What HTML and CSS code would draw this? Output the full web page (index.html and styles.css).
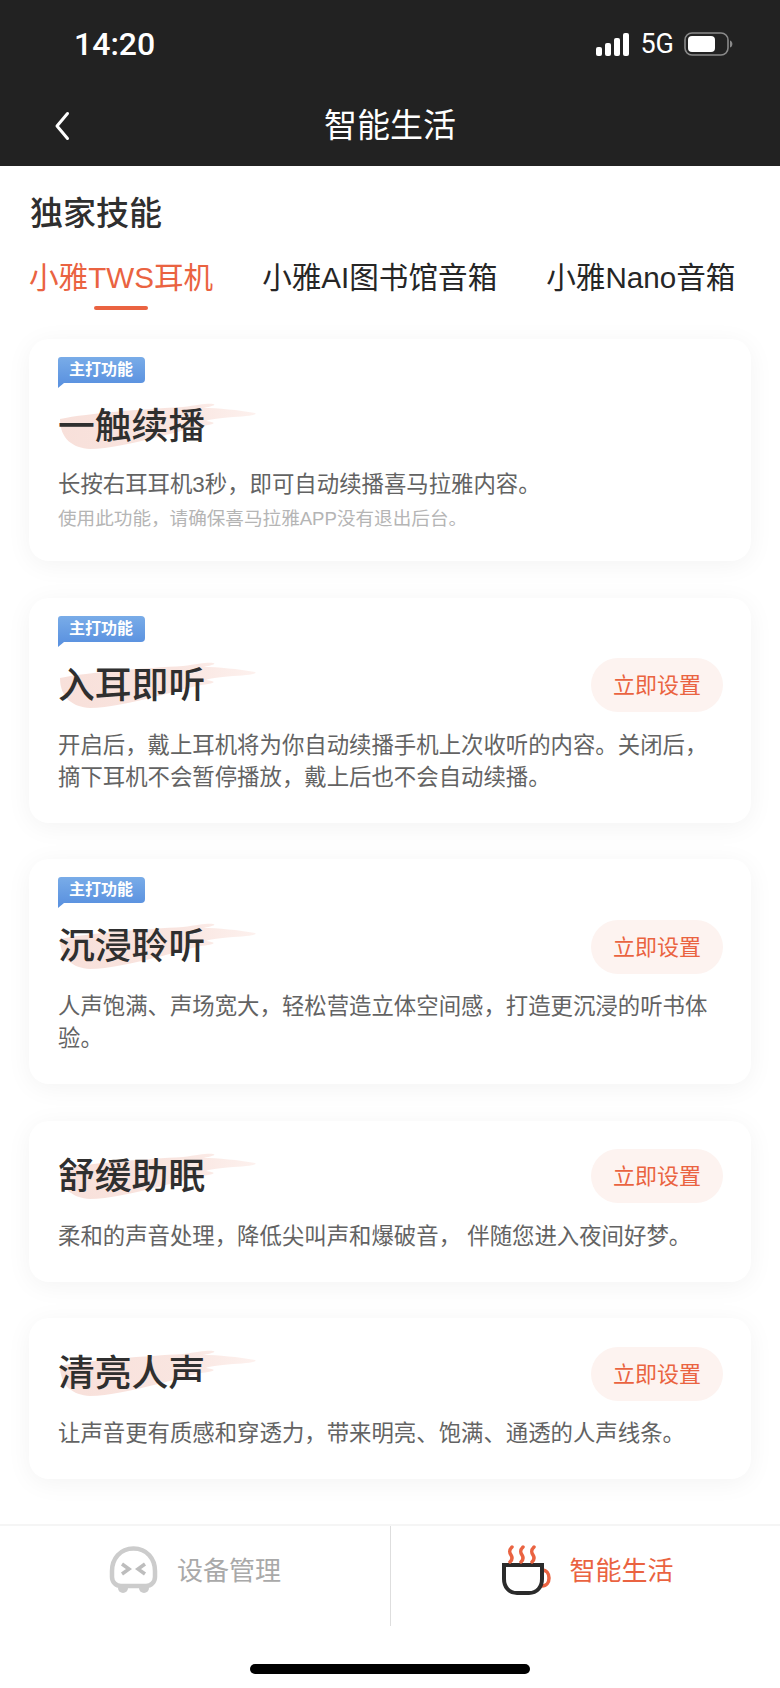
FILE: index.html
```html
<!DOCTYPE html>
<html lang="zh-CN">
<head>
    <meta charset="UTF-8">
    <meta name="viewport" content="width=device-width, initial-scale=1.0">
    <title>智能生活</title>
    <link rel="stylesheet" href="styles.css">
</head>
<body>
    <svg class="defs" width="0" height="0" aria-hidden="true">
        <linearGradient id="brush-fill" x1="0" y1="0" x2="1" y2="0">
            <stop offset="0" stop-color="#f8e0da"/>
            <stop offset="0.6" stop-color="#f9e5e0"/>
            <stop offset="1" stop-color="#fdf1ee"/>
        </linearGradient>
        <symbol id="brush" viewBox="0 0 200 46">
            <path d="M2 16C30 10 90 6 125 4c15-2 25-4 30-3 5 1-5 3-10 4 15 0 35 2 52 5 3 2-7 3-22 4-15 1-25 3-27 4 7 1 12 2 2 4-15 2-25 6-50 12-25 6-50 12-68 12C15 45 2 36 2 16z" fill="url(#brush-fill)"/>
        </symbol>
    </svg>

    <header class="top-bar">
        <div class="status-bar">
            <span class="time">14:20</span>
            <div class="status-icons">
                <svg width="36" height="24" viewBox="0 0 36 24">
                    <rect x="1" y="15" width="6" height="9" rx="2" fill="#fff"/>
                    <rect x="10" y="11" width="6" height="13" rx="2" fill="#fff"/>
                    <rect x="19" y="6" width="6" height="18" rx="2" fill="#fff"/>
                    <rect x="28" y="1" width="6" height="23" rx="2" fill="#fff"/>
                </svg>
                <span class="network">5G</span>
                <svg width="49" height="24" viewBox="0 0 49 24">
                    <rect x="1" y="1" width="43" height="22" rx="7" fill="none" stroke="#8a8a8a" stroke-width="1.600"/>
                    <rect x="4" y="4" width="27" height="16" rx="4" fill="#fff"/>
                    <path d="M46 8.500c1.600.5 2.400 2 2.400 3.500s-.8 3-2.400 3.500z" fill="#8a8a8a"/>
                </svg>
            </div>
        </div>
        <div class="nav-bar">
            <svg class="back" width="18" height="30" viewBox="0 0 18 30">
                <path d="M14.500 2.500L4 15l10.500 12.500" fill="none" stroke="#fff" stroke-width="3" stroke-linecap="round" stroke-linejoin="round"/>
            </svg>
            <span class="nav-title">智能生活</span>
        </div>
    </header>

    <main class="content">
        <h2 class="section-title">独家技能</h2>
        <div class="tabs">
            <span class="tab active">小雅TWS耳机</span>
            <span class="tab">小雅AI图书馆音箱</span>
            <span class="tab">小雅Nano音箱</span>
        </div>

        <section class="card">
            <div class="badge">主打功能</div>
            <div class="card-head plain">
                <h3 class="card-title"><svg class="brush"><use href="#brush"/></svg><span>一触续播</span></h3>
            </div>
            <p class="card-desc">长按右耳耳机3秒，即可自动续播喜马拉雅内容。</p>
            <p class="card-hint">使用此功能，请确保喜马拉雅APP没有退出后台。</p>
        </section>

        <section class="card">
            <div class="badge">主打功能</div>
            <div class="card-head">
                <h3 class="card-title"><svg class="brush"><use href="#brush"/></svg><span>入耳即听</span></h3>
                <button class="set-btn">立即设置</button>
            </div>
            <p class="card-desc">开启后，戴上耳机将为你自动续播手机上次收听的内容。关闭后，摘下耳机不会暂停播放，戴上后也不会自动续播。</p>
        </section>

        <section class="card">
            <div class="badge">主打功能</div>
            <div class="card-head">
                <h3 class="card-title"><svg class="brush"><use href="#brush"/></svg><span>沉浸聆听</span></h3>
                <button class="set-btn">立即设置</button>
            </div>
            <p class="card-desc">人声饱满、声场宽大，轻松营造立体空间感，打造更沉浸的听书体验。</p>
        </section>

        <section class="card">
            <div class="card-head">
                <h3 class="card-title"><svg class="brush"><use href="#brush"/></svg><span>舒缓助眠</span></h3>
                <button class="set-btn">立即设置</button>
            </div>
            <p class="card-desc">柔和的声音处理，降低尖叫声和爆破音， 伴随您进入夜间好梦。</p>
        </section>

        <section class="card">
            <div class="card-head">
                <h3 class="card-title"><svg class="brush"><use href="#brush"/></svg><span>清亮人声</span></h3>
                <button class="set-btn">立即设置</button>
            </div>
            <p class="card-desc">让声音更有质感和穿透力，带来明亮、饱满、通透的人声线条。</p>
        </section>
    </main>

    <footer class="bottom">
        <nav class="tab-bar">
            <div class="tab-item">
                <svg width="50" height="48" viewBox="0 0 50 48">
                    <circle cx="14" cy="42" r="5" fill="#ccc"/>
                    <circle cx="35" cy="42" r="5" fill="#ccc"/>
                    <path d="M24.500 2.500C11 2.500 3 13 3 25v6c0 5 4 9 9 9h25c5 0 9-4 9-9v-6C46 13 38 2.500 24.500 2.500z" fill="#fff" stroke="#ccc" stroke-width="4.500"/>
                    <path d="M13 18l7 5-7 5M36 18l-7 5 7 5" fill="none" stroke="#bdbdbd" stroke-width="3.500"/>
                </svg>
                <span>设备管理</span>
            </div>
            <div class="tab-item current">
                <svg width="50" height="50" viewBox="0 0 50 50">
                    <path d="M41 25c4.500 0 7 3.500 7 8s-2.500 8-7 8" fill="none" stroke="#ea6341" stroke-width="3.500"/>
                    <path d="M3 20h38v14c0 8-5 14-13 14H16C8 48 3 42 3 34z" fill="#fff" stroke="#2b2b2b" stroke-width="4"/>
                    <path d="M11 2c-3 3-3 5-1 8s1 5-1 7M22 2c-3 3-3 5-1 8s1 5-1 7M33 2c-3 3-3 5-1 8s1 5-1 7" fill="none" stroke="#ea6341" stroke-width="3.500" stroke-linecap="round"/>
                </svg>
                <span>智能生活</span>
            </div>
        </nav>
        <div class="home-row"><div class="home-bar"></div></div>
    </footer>
</body>
</html>
```

FILE: styles.css
```css
:root {
    --orange: #ea6341;
    --dark: #222222;
    --title: #2f2f2f;
    --desc: #636363;
}

* {
    box-sizing: border-box;
}

body {
    margin: 0;
    height: 1688px;
    display: flex;
    flex-direction: column;
    background: #fff;
    font-family: "Liberation Sans", "Noto Sans CJK SC", sans-serif;
    overflow: hidden;
}

.defs {
    position: absolute;
}

.top-bar {
    height: 166px;
    background: var(--dark);
    color: #fff;
}

.status-bar {
    height: 88px;
    padding: 28px 47px 0 74px;
    display: flex;
    justify-content: space-between;
    align-items: flex-start;
}

.time {
    font-family: Roboto, sans-serif;
    font-size: 32px;
    font-weight: 500;
    line-height: 32px;
}

.status-icons {
    display: flex;
    align-items: center;
    gap: 9px;
    margin-top: 4px;
}

.network {
    font-family: Roboto, sans-serif;
    font-size: 27px;
    line-height: 24px;
    margin-right: 1px;
}

.nav-bar {
    height: 76px;
    padding-left: 53px;
    display: flex;
    align-items: center;
    position: relative;
}

.nav-title {
    position: absolute;
    left: 0;
    right: 0;
    text-align: center;
    font-size: 33px;
    line-height: 44px;
}

.content {
    flex: 1;
    padding: 0 29px;
}

.section-title {
    margin: 25px 0 0 1px;
    font-size: 33px;
    line-height: 46px;
    font-weight: 500;
    color: var(--title);
}

.tabs {
    display: flex;
    gap: 49px;
    margin: 21px 0 41px 0;
}

.tab {
    position: relative;
    font-size: 29.600px;
    line-height: 40px;
    color: #262626;
    white-space: nowrap;
}

.tab.active {
    color: var(--orange);
}

.tab.active::after {
    content: "";
    position: absolute;
    left: 65px;
    bottom: -12px;
    width: 54px;
    height: 4px;
    border-radius: 2px;
    background: var(--orange);
}

.card {
    padding: 29px;
    margin-bottom: 36.500px;
    background: #fff;
    border-radius: 20px;
    box-shadow: 0 4px 26px rgba(0, 0, 0, 0.05);
}

.badge {
    position: relative;
    width: 87px;
    height: 26px;
    margin: -11px 0 17px;
    padding-left: 11px;
    border-radius: 3px 4px 4px 0;
    background: linear-gradient(180deg, #79ace8, #5c93e0);
    color: #fff;
    font-size: 16px;
    font-weight: 700;
    line-height: 26px;
}

.badge::after {
    content: "";
    position: absolute;
    left: 0;
    top: 26px;
    border-top: 5px solid #5c93e0;
    border-right: 6px solid transparent;
}

.card-head {
    height: 54px;
    display: flex;
    justify-content: space-between;
    align-items: center;
}

.card-head.plain {
    height: 52px;
    align-items: flex-start;
}

.card-title {
    position: relative;
    margin: 0;
    font-size: 36.800px;
    line-height: 54px;
    font-weight: 500;
    color: var(--title);
}

.card-title span {
    position: relative;
}

.brush {
    position: absolute;
    left: 0;
    top: 3px;
    width: 200px;
    height: 46px;
}

.set-btn {
    width: 132px;
    height: 54px;
    margin: -1px -1px 0 0;
    padding: 0 0 4px;
    border: none;
    border-radius: 27px;
    background: #fdf3f0;
    color: var(--orange);
    font-family: inherit;
    font-size: 22px;
}

.card-desc {
    margin: 17px 0 0;
    font-size: 22.400px;
    line-height: 32px;
    color: var(--desc);
}

.card-hint {
    margin: 4px 0 0;
    font-size: 18.600px;
    line-height: 27px;
    color: #b5b5b5;
}

.bottom {
    height: 164px;
}

.tab-bar {
    height: 102px;
    display: flex;
    border-top: 2px solid #f5f5f5;
}

.tab-item {
    flex: 0 0 50%;
    display: flex;
    justify-content: center;
    align-items: center;
    gap: 18px;
    padding-bottom: 16px;
    font-size: 26px;
    color: #a9a9a9;
}

.tab-item svg {
    margin-top: 3px;
}

.tab-item.current {
    padding-left: 4px;
    color: var(--orange);
    border-left: 1px solid #dedede;
}

.home-row {
    display: flex;
    justify-content: center;
    padding-top: 38px;
}

.home-bar {
    width: 280px;
    height: 10px;
    border-radius: 5px;
    background: #000;
}
```
